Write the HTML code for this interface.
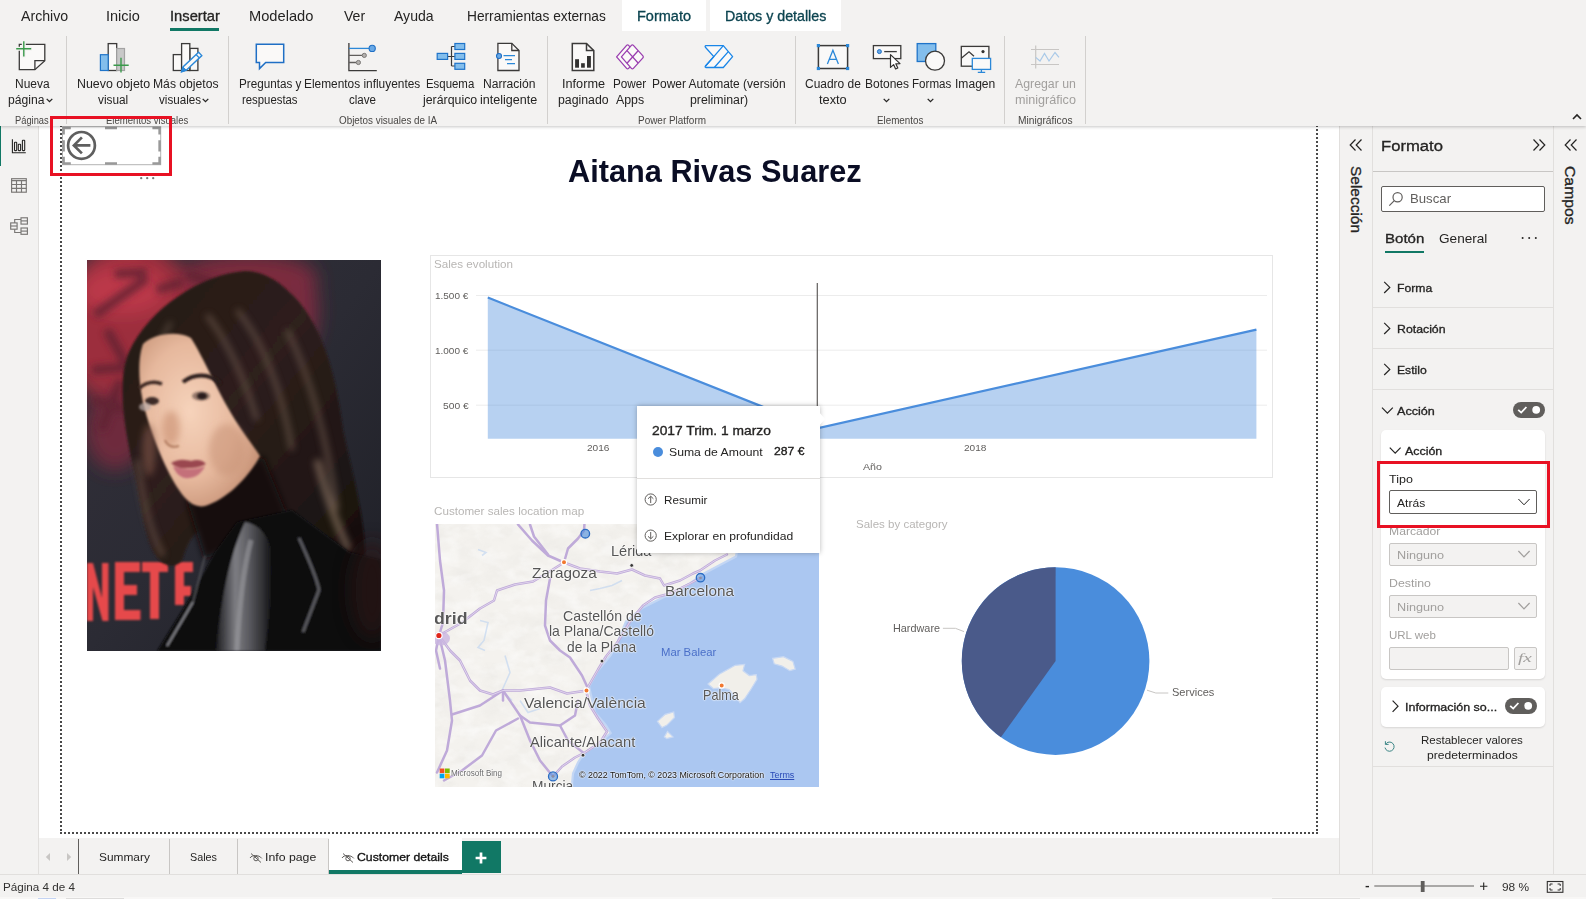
<!DOCTYPE html>
<html lang="es">
<head>
<meta charset="utf-8">
<title>Power BI Desktop</title>
<style>
*{box-sizing:border-box;margin:0;padding:0}
html,body{width:1586px;height:899px;overflow:hidden;background:#f3f2f1;font-family:"Liberation Sans",sans-serif;color:#252423}
#app{position:relative;width:1586px;height:899px;overflow:hidden;background:#f3f2f1}
.a{position:absolute}
.t{position:absolute;white-space:pre;line-height:1;transform-origin:0 50%;display:block}
svg{position:absolute;overflow:visible}
.vsep{position:absolute;width:1px;background:#d2d0ce;top:36px;height:88px}
.hline{position:absolute;height:1px;background:#e1dfdd}
.vline{position:absolute;width:1px;background:#e1dfdd}
</style>
</head>
<body>
<div id="app">

<!-- ================= CANVAS AREA (white) ================= -->
<div class="a" id="canvas" style="left:39px;top:126px;width:1300px;height:712px;background:#fff"></div>

<!-- dotted page frame -->
<div class="a" style="left:60px;top:118px;width:1258px;height:715.5px;border:2px dotted #4a4a4a;border-top:none"></div>

<!-- back button visual (selected) -->
<svg style="left:55px;top:120px" width="120" height="70" viewBox="55 120 120 70" fill="none">
 <rect x="62.5" y="126.7" width="98.2" height="38" stroke="#b3b3b3" stroke-width="1"/>
 <g stroke="#999" stroke-width="2.5">
  <path d="M63.6 134.6V127.9H70.8M152.4 127.9H159.6V134.6M159.6 156.8V163.5H152.4M70.8 163.5H63.6V156.8"/>
  <path d="M105 127.9H117M105 163.5H117M63.6 140.3V151.4M159.6 140.3V151.4"/>
 </g>
 <circle cx="81.5" cy="145.4" r="13.4" stroke="#5f5f5f" stroke-width="2.7"/>
 <path d="M74 145.4H90.4M81.9 137.4 73.9 145.4 81.9 153.4" stroke="#5f5f5f" stroke-width="2.7"/>
 <g fill="#777"><circle cx="141.2" cy="178.2" r="1.15"/><circle cx="147.2" cy="178.2" r="1.15"/><circle cx="153.2" cy="178.2" r="1.15"/></g>
</svg>

<!-- title -->
<span class="t" style="left:567.9px;top:156.3px;font-size:31.2px;color:#0a0d24;transform:scaleX(0.9848);font-weight:700">Aitana Rivas Suarez</span>

<!-- picture visual: abstract colour-composition placeholder -->
<svg style="left:87px;top:260px" width="294" height="391" viewBox="0 0 294 391">
<defs>
 <clipPath id="pc"><rect x="0" y="0" width="294" height="391"/></clipPath>
 <filter id="pb1" x="-20%" y="-20%" width="140%" height="140%"><feGaussianBlur stdDeviation="1.3"/></filter>
 <filter id="pb3" x="-30%" y="-30%" width="160%" height="160%"><feGaussianBlur stdDeviation="3.5"/></filter>
 <filter id="pb8" x="-40%" y="-40%" width="180%" height="180%"><feGaussianBlur stdDeviation="9"/></filter>
 <linearGradient id="pbg" x1="0" y1="0" x2="1" y2="1"><stop offset="0" stop-color="#33303a"/><stop offset=".5" stop-color="#2b2b34"/><stop offset="1" stop-color="#1e1f26"/></linearGradient>
 <radialGradient id="pskin" cx=".42" cy=".45" r=".65"><stop offset="0" stop-color="#f6d3bb"/><stop offset=".6" stop-color="#e6b89d"/><stop offset="1" stop-color="#c48f73"/></radialGradient>
 <linearGradient id="phair" x1="0" y1="0" x2="1" y2="1"><stop offset="0" stop-color="#241714"/><stop offset=".45" stop-color="#2e201c"/><stop offset="1" stop-color="#150e0d"/></linearGradient>
 <linearGradient id="pleather" x1="0" y1="0" x2="1" y2="0"><stop offset="0" stop-color="#1b1b1e"/><stop offset=".35" stop-color="#7d7d82"/><stop offset=".6" stop-color="#5a5a5f"/><stop offset="1" stop-color="#141416"/></linearGradient>
</defs>
<g clip-path="url(#pc)">
 <rect width="294" height="391" fill="url(#pbg)"/>
 <!-- red backdrop -->
 <g filter="url(#pb8)">
  <ellipse cx="44" cy="66" rx="70" ry="84" fill="#9c2d3e"/>
  <ellipse cx="36" cy="30" rx="44" ry="24" fill="#bb3848"/>
  <ellipse cx="160" cy="18" rx="70" ry="24" fill="#7c2a3e"/>
  <ellipse cx="215" cy="50" rx="16" ry="42" fill="#7a2a40"/>
  <ellipse cx="28" cy="170" rx="30" ry="40" fill="#6e2a3c"/>
 </g>
 <g filter="url(#pb3)" stroke="#5e2030" stroke-width="9" fill="none" opacity=".8">
  <path d="M8 55 60 18M5 110 70 105M20 70 48 120M70 30 95 22M28 14 60 12M6 140 40 150M14 170 34 120M100 14 130 24"/>
 </g>
 <!-- lower-left lettering -->
 <g filter="url(#pb1)" fill="#e6494b">
  <path d="M0 303H6L15 338V303H21.500V361H15.500L6 327V361H0Z"/>
  <path d="M28 302H53V312H37V325H50V335H37V350H53.500V360H28Z"/>
  <path d="M55 302H81V312H72V359H63V312H55Z"/>
  <path d="M88 302H106V312H97V326H104V336H97V345H88Z"/>
 </g>
 <!-- hair mass -->
 <g filter="url(#pb1)">
  <path d="M158 11C115 14 62 48 42 92C30 120 36 165 48 215C55 250 58 285 72 300C80 308 92 308 96 298C104 270 118 262 150 258L200 250C230 262 262 300 278 300C280 262 262 200 256 170C250 120 236 60 200 30C188 18 172 11 158 11Z" fill="url(#phair)"/>
 </g>
 <!-- hair highlights -->
 <g filter="url(#pb3)" fill="none" stroke="#6a564c" stroke-width="5" opacity=".75">
  <path d="M150 50C175 80 195 130 205 190"/><path d="M120 55C140 80 158 120 170 160"/><path d="M200 70C225 120 240 180 250 250"/>
  <path d="M230 200C240 240 252 270 262 290" stroke="#86705f" stroke-width="7"/>
  <path d="M50 200C56 240 62 270 76 296" stroke="#6b5548"/>
  <path d="M84 62 70 88" stroke="#8a7566" stroke-width="2.500"/>
 </g>
 <!-- neck shadow -->
 <path d="M100 240 176 196 200 255 118 300Z" fill="#120c0b" filter="url(#pb3)"/>
 <!-- face -->
 <g filter="url(#pb1)">
  <path d="M56 84C66 74 90 70 104 78C116 96 132 136 152 166C160 178 168 188 173 196C160 220 138 240 118 246C108 248 100 242 92 230C80 212 66 180 58 150C52 128 50 100 56 84Z" fill="url(#pskin)"/>
 </g>
 <g filter="url(#pb3)">
  <ellipse cx="84" cy="168" rx="9" ry="17" fill="#c9906f" opacity=".6"/>
  <ellipse cx="140" cy="190" rx="18" ry="26" fill="#c89478" opacity=".55"/>
  <ellipse cx="62" cy="190" rx="7" ry="26" fill="#8a5d4a" opacity=".55"/>
 </g>
 <g filter="url(#pb1)">
  <path d="M52 128C60 122 68 121 75 124" stroke="#3a2822" stroke-width="3.500" fill="none"/>
  <path d="M96 122C106 114 122 112 134 124" stroke="#2c1e1a" stroke-width="4" fill="none"/>
  <ellipse cx="65" cy="141" rx="7" ry="4" fill="#3c2c28"/>
  <ellipse cx="114" cy="136" rx="9" ry="4.500" fill="#35262280"/>
  <ellipse cx="115" cy="136" rx="5" ry="3.600" fill="#2a1c1a"/>
  <ellipse cx="58" cy="147" rx="6" ry="4" fill="#b9a9a6" opacity=".7"/>
  <path d="M84 203C92 198 100 200 104 201C110 199 116 200 119 204C112 208 106 208 100 208C94 209 88 207 84 203Z" fill="#9a4650"/>
  <path d="M86 206C96 210 110 210 118 206C114 216 104 219 98 218C92 217 88 212 86 206Z" fill="#c4707a"/>
  <path d="M78 180C80 186 86 188 92 186" stroke="#b07a5e" stroke-width="2" fill="none"/>
 </g>
 <!-- jacket -->
 <g filter="url(#pb1)">
  <path d="M70 391 104 336 128 292 150 262 205 250 262 292 294 300V391Z" fill="#0b0b0d"/>
  <path d="M129 391C134 340 142 296 158 262C170 264 180 272 184 290C186 330 182 360 178 391Z" fill="url(#pleather)"/>
  <path d="M150 391C152 350 156 310 164 280" stroke="#9a9a9f" stroke-width="5" fill="none" opacity=".6"/>
  <path d="M212 278C222 300 230 318 232 330L216 372" stroke="#6e6e74" stroke-width="3" fill="none" opacity=".8"/>
  <path d="M80 386 106 342" stroke="#8c8c92" stroke-width="1.800" fill="none"/>
  <path d="M106 342 118 296" stroke="#55555a" stroke-width="1.500" fill="none"/>
 </g>
 <ellipse cx="285" cy="330" rx="22" ry="50" fill="#2a1418" filter="url(#pb8)" opacity=".7"/>
</g>
</svg>


<!-- ===== Sales evolution chart ===== -->
<div class="a" style="left:430px;top:255px;width:843px;height:223px;border:1px solid #e6e6e6"></div>
<span class="t" style="left:434.4px;top:258.0px;font-size:11.6px;color:#b8b6b4;transform:scaleX(1.0041)">Sales evolution</span>
<svg style="left:430px;top:255px" width="843" height="223" viewBox="430 255 843 223" fill="none">
 <path d="M476 295.5H1267M476 350.2H1267M476 405.2H1267" stroke="#ececec" stroke-width="1"/>
 <path d="M487.8 297.6 817.3 428.4 1256.4 329.6V438.8H487.8Z" fill="#4a8ddc" fill-opacity=".4"/>
 <path d="M487.8 297.6 817.3 428.4 1256.4 329.6" stroke="#4a8ddc" stroke-width="2.2"/>
 <path d="M817.3 283V438" stroke="#605e5c" stroke-width="1.2"/>
</svg>
<span class="t" style="left:435.2px;top:291.0px;font-size:9.8px;color:#605e5c;transform:scaleX(1.0181)">1.500 €</span>
<span class="t" style="left:435.2px;top:345.5px;font-size:9.8px;color:#605e5c;transform:scaleX(1.0181)">1.000 €</span>
<span class="t" style="left:442.7px;top:400.5px;font-size:9.8px;color:#605e5c;transform:scaleX(1.0509)">500 €</span>
<span class="t" style="left:587.0px;top:443.3px;font-size:9.8px;color:#605e5c;transform:scaleX(1.0313)">2016</span>
<span class="t" style="left:964.0px;top:443.3px;font-size:9.8px;color:#605e5c;transform:scaleX(1.0313)">2018</span>
<span class="t" style="left:862.5px;top:461.5px;font-size:9.8px;color:#605e5c;transform:scaleX(1.0885)">Año</span>

<!-- ===== Map ===== -->
<span class="t" style="left:434.4px;top:505.0px;font-size:11.6px;color:#b8b6b4;transform:scaleX(1.0044)">Customer sales location map</span>
<svg style="left:435px;top:523.5px" width="384" height="263" viewBox="435 523.5 384 263">
<defs>
 <clipPath id="mc"><rect x="435" y="523.5" width="384" height="263"/></clipPath>
 <filter id="mterr" x="0" y="0" width="100%" height="100%">
  <feTurbulence type="fractalNoise" baseFrequency=".035 .06" numOctaves="4" seed="7" result="n"/>
  <feColorMatrix in="n" type="matrix" values="0 0 0 0 .55  0 0 0 0 .55  0 0 0 0 .52  0 0 0 -1.600 .95"/>
  <feComposite in2="SourceGraphic" operator="in"/>
 </filter>
 <filter id="mterr2" x="0" y="0" width="100%" height="100%">
  <feTurbulence type="fractalNoise" baseFrequency=".05 .08" numOctaves="3" seed="21" result="n"/>
  <feColorMatrix in="n" type="matrix" values="0 0 0 0 1  0 0 0 0 1  0 0 0 0 1  0 0 0 2.200 -.95"/>
  <feComposite in2="SourceGraphic" operator="in"/>
 </filter>
 <filter id="mb" x="-10%" y="-10%" width="120%" height="120%"><feGaussianBlur stdDeviation=".6"/></filter>
 <path id="mland" d="M435 523.500H742L736 556 704 573 690 583 665 596 643 607 626 621 617 643 610.700 654.700 598 670 589 686 595 712 606 725 610.700 732.500 598 743.500 584 752.800 578 762 573 773 571.700 787H435Z"/>
</defs>
<g clip-path="url(#mc)">
 <rect x="435" y="523.500" width="384" height="263" fill="#abc7f1"/>
 <use href="#mland" fill="#f4f2ee"/>
 <use href="#mland" fill="#000" filter="url(#mterr)" opacity=".16"/>
 <use href="#mland" fill="#fff" filter="url(#mterr2)" opacity=".55"/>
 <!-- coast tint -->
 <path d="M742 523.500 736 556 704 573 690 583 665 596 643 607 626 621 617 643 610.700 654.700 598 670 589 686 595 712 606 725 610.700 732.500 598 743.500 584 752.800 578 762 573 773 571.700 787" fill="none" stroke="#c3d6f4" stroke-width="2.200" filter="url(#mb)"/>
 <!-- islands -->
 <g fill="#f1efea" stroke="#c9d9f3" stroke-width="1.200" filter="url(#mb)">
  <path d="M708 683.500 719.700 673.400 735.300 664.800 744.600 664 743 670.200 749.300 675 756.300 674.100 757 678.800 750.800 689 744.600 698.300 740 702.200 736 696.700 729 689 721.200 687.400 713.500 688.200Z"/>
  <path d="M772.600 657.800 783.500 656.200 792.900 660.900 795.200 668.700 789.800 670.200 782 665.600 774.200 663.200Z"/>
  <path d="M657.400 720.900 665.200 713.900 673.700 711.500 674.500 717 666.700 724.800 662 727.100Z"/>
  <path d="M664.400 736.400 667.500 731 673 736.400 666.700 738Z"/>
 </g>
 <!-- rivers/lakes -->
 <g fill="none" stroke="#bcd3f1" stroke-width="1.600" opacity=".6" filter="url(#mb)">
  <path d="M478 549 486 552 482 555M480 620 488 622 484 640 478 647 485 650"/>
  <path d="M590 590 600 588 612 585 622 580"/>
  <path d="M505 655 510 672 502 690 512 700"/>
  <path d="M520 700 528 712 540 708"/>
 </g>
 <!-- roads -->
 <g fill="none" stroke="#bfaad9" stroke-width="2.500" stroke-linejoin="round" stroke-linecap="round">
  <path d="M437 523 440 560 444 590 443 622 439 635"/>
  <path d="M439 635 462 622 480 608 494 600 497 590 515 584 533 581 548 572 564 562"/>
  <path d="M564 562 548 555 532 540 518 524"/><path d="M530 524 534 536 548 554"/>
  <path d="M564 562 568 548 578 538 584 530 584.500 523"/>
  <path d="M564 562 580 568 600 571 617 573 632 569 645 575 660 578 664 585 680 580 693 573 700 570 715 560 727 554"/>
  <path d="M550 578 546 600 545 625 550 640 560 650 570 657 582 675 588 688"/>
  <path d="M701 577 690 583 670 593 655 597 643 605 630 621 618 641 606 656 598 669 590 683 586 690 590 705 598 718 607 731 600 742 585 752 575 757 562 766 553 776"/>
  <path d="M439 635 450 650 460 660 470 680 480 690 493 694 503 690 520 690 550 687 567 693 587 690"/>
  <path d="M439 635 445 660 450 700 452 720 447 750 437 772"/>
  <path d="M503 690 520 715 530 722 560 725 575 715 578 700"/>
  <path d="M520 715 530 740 540 760 553 776"/>
  <path d="M452 714 480 705 503 690"/>
  <path d="M518 718 496 730 482 755 462 770 444 780"/>
  <path d="M560 725 568 740 583 752"/>
  <path d="M503 690 503 700"/>
  <path d="M439 635 436 650 440 668"/>
 </g>
 <g fill="none" stroke="#e6dcf0" stroke-width=".900" stroke-linejoin="round" opacity=".9">
  <path d="M439 635 462 622 480 608 494 600 497 590 515 584 533 581 548 572 564 562"/>
  <path d="M564 562 580 568 600 571 617 573 632 569 645 575 660 578 664 585 680 580 693 573 700 570 715 560 727 554"/>
  <path d="M701 577 690 583 670 593 655 597 643 605 630 621 618 641 606 656 598 669 590 683 586 690 590 705 598 718 607 731 600 742 585 752 575 757 562 766 553 776"/>
  <path d="M439 635 450 650 460 660 470 680 480 690 493 694 503 690 520 690 550 687 567 693 587 690"/>
 </g>
 <ellipse cx="441" cy="638" rx="9" ry="7" fill="#c9b5e0" opacity=".8"/>
 <!-- city dots -->
 <g stroke="#fff" stroke-width="1.200"><circle cx="564" cy="561.700" r="2.600" fill="#f2782f"/><circle cx="586.500" cy="690" r="2.600" fill="#f2782f"/><circle cx="721.700" cy="685" r="2.600" fill="#f2782f"/><circle cx="438.900" cy="635" r="3.200" fill="#e0261c"/></g>
 <g fill="#3b3a39" stroke="#fff" stroke-width=".800"><circle cx="631.700" cy="564.900" r="1.900"/><circle cx="602" cy="660.600" r="1.900"/><circle cx="583" cy="754.700" r="1.900"/></g>
 <!-- data bubbles -->
 <g fill="#4a8ddc" stroke="#2a6cc4" stroke-width="1.300"><circle cx="585.300" cy="533.200" r="4.300" fill-opacity=".62"/><circle cx="700.500" cy="577.200" r="4.200" fill-opacity=".4"/><circle cx="553" cy="775.900" r="4.500" fill-opacity=".55"/></g><g fill="#8f8fa0"><circle cx="700.500" cy="577.500" r="1.300"/><circle cx="553" cy="775.700" r="1.300"/></g>
 <!-- bing logo -->
 <rect x="439.700" y="768" width="4.700" height="4.600" fill="#f25022"/><rect x="445" y="768" width="4.700" height="4.600" fill="#7fba00"/><rect x="439.700" y="773.200" width="4.700" height="4.600" fill="#00a4ef"/><rect x="445" y="773.200" width="4.700" height="4.600" fill="#ffb900"/>
</g>
</svg>
<div class="a" style="left:435px;top:523.5px;width:384px;height:263px;overflow:hidden"><div class="a" style="left:-435px;top:-523.5px;width:1586px;height:899px">
<span class="t" style="left:610.8px;top:544.0px;font-size:14.6px;color:#555;transform:scaleX(0.9971);text-shadow:0 0 2px #fff,0 0 2px #fff,0 0 1px #fff">Lérida</span>
<span class="t" style="left:532.1px;top:565.9px;font-size:14.8px;color:#555;transform:scaleX(1.0346);text-shadow:0 0 2px #fff,0 0 2px #fff,0 0 1px #fff">Zaragoza</span>
<span class="t" style="left:433.9px;top:610.9px;font-size:16px;color:#585858;transform:scaleX(1.1086);font-weight:700;text-shadow:0 0 2px #fff,0 0 2px #fff,0 0 1px #fff">drid</span>
<span class="t" style="left:562.5px;top:608.8px;font-size:14.6px;color:#555;transform:scaleX(0.9707);text-shadow:0 0 2px #fff,0 0 2px #fff,0 0 1px #fff">Castellón de</span>
<span class="t" style="left:549.3px;top:624.4px;font-size:14.6px;color:#555;transform:scaleX(0.9583);text-shadow:0 0 2px #fff,0 0 2px #fff,0 0 1px #fff">la Plana/Castelló</span>
<span class="t" style="left:567.2px;top:640.0px;font-size:14.6px;color:#555;transform:scaleX(0.9470);text-shadow:0 0 2px #fff,0 0 2px #fff,0 0 1px #fff">de la Plana</span>
<span class="t" style="left:665.2px;top:582.9px;font-size:15.4px;color:#555;transform:scaleX(0.9946);text-shadow:0 0 2px #fff,0 0 2px #fff,0 0 1px #fff">Barcelona</span>
<span class="t" style="left:661.1px;top:646.8px;font-size:11.8px;color:#4a6fc8;transform:scaleX(0.9580)">Mar Balear</span>
<span class="t" style="left:524.0px;top:694.9px;font-size:15px;color:#555;transform:scaleX(1.0407);text-shadow:0 0 2px #fff,0 0 2px #fff,0 0 1px #fff">Valencia/València</span>
<span class="t" style="left:529.8px;top:733.9px;font-size:15px;color:#555;transform:scaleX(0.9788);text-shadow:0 0 2px #fff,0 0 2px #fff,0 0 1px #fff">Alicante/Alacant</span>
<span class="t" style="left:702.9px;top:687.6px;font-size:14.4px;color:#555;transform:scaleX(0.8785);text-shadow:0 0 2px #fff,0 0 2px #fff,0 0 1px #fff">Palma</span>
<span class="t" style="left:532.0px;top:777.7px;font-size:15px;color:#555;transform:scaleX(0.9152);text-shadow:0 0 2px #fff,0 0 2px #fff,0 0 1px #fff">Murcia</span>
<span class="t" style="left:451.4px;top:768.8px;font-size:8.8px;color:#6a6a6a;transform:scaleX(0.9165);text-shadow:0 0 2px #fff,0 0 2px #fff,0 0 1px #fff">Microsoft Bing</span>
<span class="t" style="left:578.7px;top:769.9px;font-size:9.6px;color:#111;transform:scaleX(0.9225);text-shadow:0 0 2px #fff,0 0 2px #fff,0 0 1px #fff">© 2022 TomTom, © 2023 Microsoft Corporation</span>
<span class="t" style="left:770.3px;top:769.9px;font-size:9.6px;color:#2a4bb8;transform:scaleX(0.9286);text-decoration:underline">Terms</span>
</div></div>


<!-- ===== Pie ===== -->
<span class="t" style="left:856.4px;top:518.0px;font-size:11.6px;color:#b8b6b4;transform:scaleX(0.9935)">Sales by category</span>
<svg style="left:880px;top:560px" width="360" height="200" viewBox="880 560 360 200" fill="none">
 <circle cx="1055.6" cy="661.1" r="93.8" fill="#4a8ddc"/>
 <path d="M1055.6 661.1V567.3A93.8 93.8 0 0 0 1000.9 737.3Z" fill="#4a5a8a"/>
 <path d="M942.9 628.3H955.4L964 631.6M1147 690.2 1155.8 693H1168.3" stroke="#c8c6c4" stroke-width="1"/>
</svg>
<span class="t" style="left:892.5px;top:623.5px;font-size:10.4px;color:#605e5c;transform:scaleX(1.0442)">Hardware</span>
<span class="t" style="left:1171.5px;top:687.7px;font-size:10.4px;color:#605e5c;transform:scaleX(1.0627)">Services</span>

<!-- ===== Tooltip ===== -->
<div class="a" style="left:637px;top:406px;width:183px;height:147px;background:#fff;box-shadow:0 0 5px rgba(0,0,0,.28)"></div>
<svg style="left:819px;top:411px" width="8" height="16" viewBox="0 0 8 16"><path d="M0 1 6 8 0 15Z" fill="#fff"/></svg>
<span class="t" style="left:652.4px;top:425.1px;font-size:12.2px;color:#252423;transform:scaleX(1.1316);-webkit-text-stroke:.32px #252423">2017 Trim. 1 marzo</span>
<div class="a" style="left:653px;top:446.6px;width:10.4px;height:10.4px;border-radius:50%;background:#4a8ddc"></div>
<span class="t" style="left:669.4px;top:446.0px;font-size:11.6px;color:#252423;transform:scaleX(1.0529)">Suma de Amount</span>
<span class="t" style="left:774.1px;top:445.8px;font-size:11.8px;color:#1b1a19;transform:scaleX(1.0321);-webkit-text-stroke:.32px #1b1a19">287 €</span>
<div class="a" style="left:637px;top:478px;width:183px;height:1px;background:#e1dfdd"></div>
<svg style="left:644px;top:493px" width="14" height="50" viewBox="644 493 14 50" fill="none" stroke="#605e5c" stroke-width="1">
 <circle cx="650.7" cy="499.5" r="5.6"/><path d="M650.7 503V496.3M648 498.8 650.7 496.2 653.4 498.8"/>
 <circle cx="650.7" cy="535.6" r="5.6"/><path d="M650.7 532V538.8M648 536.3 650.7 538.9 653.4 536.3"/>
</svg>
<span class="t" style="left:664.1px;top:493.9px;font-size:11.6px;color:#252423;transform:scaleX(1.0067)">Resumir</span>
<span class="t" style="left:664.1px;top:530.0px;font-size:11.6px;color:#252423;transform:scaleX(1.0437)">Explorar en profundidad</span>


<!-- ================= LEFT SIDEBAR ================= -->
<div class="a" style="left:0;top:126px;width:39px;height:748px;background:#f3f2f1;border-right:1px solid #e1dfdd"></div>
<div class="a" style="left:0;top:126px;width:1px;height:40px;background:#117865"></div>
<svg style="left:0;top:126px" width="39" height="120" viewBox="0 126 39 120" fill="none" stroke="#3b3a39" stroke-width="1.1">
 <!-- report view -->
 <path d="M12.4 139.2V152.7H25.8" stroke="#252423"/>
 <g stroke="#252423"><rect x="14.5" y="142.2" width="2.2" height="8.4" rx=".5"/><rect x="18.3" y="144.2" width="2.3" height="6.4" rx=".5"/><rect x="22.4" y="140.3" width="2.3" height="10.3" rx=".5"/></g>
 <!-- data view -->
 <g stroke="#797775" stroke-width="1.15"><rect x="11.6" y="178.7" width="14.7" height="13.5"/><path d="M11.6 180.6H26.300M11.600 184.500H26.300M11.600 188.400H26.300M16.500 180.600V192.200M21.500 180.600V192.200"/></g>
 <!-- model view -->
 <g stroke="#797775" stroke-width="1.15"><rect x="10.700" y="222.900" width="6.400" height="6.300"/><path d="M10.700 226H17.100"/><rect x="21" y="217.800" width="6.400" height="6.300"/><path d="M21 220.900H27.400"/><rect x="21" y="228" width="6.400" height="6.300"/><path d="M21 231.100H27.400"/><path d="M14.700 222.900V219.500H21M14.700 229.200V232.500H21"/></g>
</svg>


<!-- ================= RIGHT PANES ================= -->
<div class="a" id="panes" style="left:1339px;top:126px;width:247px;height:748px;background:#f3f2f1"></div>
<!-- pane separators -->
<div class="vline" style="left:1339px;top:126px;height:748px"></div>
<div class="vline" style="left:1372px;top:126px;height:748px"></div>
<div class="vline" style="left:1553px;top:126px;height:748px"></div>
<!-- collapsed Selección / Campos -->
<svg style="left:1349px;top:138px" width="14" height="14" viewBox="0 0 14 14" fill="none" stroke="#252423" stroke-width="1.2"><path d="M6.5 1.5 1.2 7 6.5 12.5M12.5 1.5 7.2 7 12.5 12.5"/></svg>
<svg style="left:1564px;top:138px" width="14" height="14" viewBox="0 0 14 14" fill="none" stroke="#252423" stroke-width="1.2"><path d="M6.5 1.5 1.2 7 6.5 12.5M12.5 1.5 7.2 7 12.5 12.5"/></svg>
<svg style="left:1532px;top:138px" width="14" height="14" viewBox="0 0 14 14" fill="none" stroke="#252423" stroke-width="1.2"><path d="M1.5 1.5 6.8 7 1.5 12.5M7.5 1.5 12.8 7 7.5 12.5"/></svg>
<div class="a" style="left:1354.6px;top:165.5px;width:0;height:0"><span style="position:absolute;left:0;top:0;white-space:pre;font-size:14.2px;font-weight:400;-webkit-text-stroke:.32px #252423;line-height:1;color:#252423;transform-origin:0 0;transform:rotate(90deg) translateY(-55%) scaleX(1.09)">Selección</span></div>
<div class="a" style="left:1568.8px;top:166px;width:0;height:0"><span style="position:absolute;left:0;top:0;white-space:pre;font-size:14.2px;font-weight:400;-webkit-text-stroke:.32px #252423;line-height:1;color:#252423;transform-origin:0 0;transform:rotate(90deg) translateY(-55%) scaleX(1.11)">Campos</span></div>

<!-- Formato header -->
<span class="t" style="left:1380.5px;top:138.4px;font-size:15.4px;color:#252423;transform:scaleX(1.0807);-webkit-text-stroke:.32px #252423">Formato</span>
<div class="hline" style="left:1373px;top:171px;width:180px;background:#c8c6c4"></div>
<!-- search -->
<div class="a" style="left:1381px;top:185.5px;width:164px;height:26.5px;background:#fff;border:1px solid #605e5c;border-radius:2px"></div>
<svg style="left:1388px;top:191px" width="16" height="16" viewBox="0 0 16 16" fill="none" stroke="#605e5c" stroke-width="1.2"><circle cx="9.6" cy="6.2" r="4.6"/><path d="M6.3 9.6 1.3 14.6"/></svg>
<span class="t" style="left:1409.6px;top:192.3px;font-size:13.4px;color:#605e5c;transform:scaleX(0.9845)">Buscar</span>
<!-- sub tabs -->
<span class="t" style="left:1384.6px;top:232.1px;font-size:13.6px;color:#252423;transform:scaleX(1.1078);-webkit-text-stroke:.32px #252423">Botón</span>
<div class="a" style="left:1385px;top:250.5px;width:38.5px;height:2px;background:#117865"></div>
<span class="t" style="left:1438.8px;top:232.1px;font-size:13.6px;color:#252423;transform:scaleX(0.9997)">General</span>
<svg style="left:1521px;top:236px" width="17" height="4" viewBox="0 0 17 4" fill="#252423"><circle cx="1.6" cy="2" r="1"/><circle cx="8.2" cy="2" r="1"/><circle cx="14.8" cy="2" r="1"/></svg>

<!-- sections -->
<svg style="left:1380px;top:280px" width="14" height="140" viewBox="1380 280 14 140" fill="none" stroke="#252423" stroke-width="1.2">
 <path d="M1384.2 281.8 1389.8 287.4 1384.2 293"/>
 <path d="M1384.2 322.8 1389.8 328.4 1384.2 334"/>
 <path d="M1384.2 363.8 1389.8 369.4 1384.2 375"/>
 <path d="M1382 407.6 1387.4 413.2 1392.8 407.6"/>
</svg>
<span class="t" style="left:1396.6px;top:281.8px;font-size:11.6px;color:#252423;transform:scaleX(1.0496);-webkit-text-stroke:.32px #252423">Forma</span>
<span class="t" style="left:1396.6px;top:322.8px;font-size:11.6px;color:#252423;transform:scaleX(1.0611);-webkit-text-stroke:.32px #252423">Rotación</span>
<span class="t" style="left:1396.6px;top:363.8px;font-size:11.6px;color:#252423;transform:scaleX(1.0494);-webkit-text-stroke:.32px #252423">Estilo</span>
<span class="t" style="left:1396.6px;top:404.8px;font-size:11.6px;color:#252423;transform:scaleX(1.0847);-webkit-text-stroke:.32px #252423">Acción</span>
<div class="hline" style="left:1373px;top:307px;width:180px"></div>
<div class="hline" style="left:1373px;top:348px;width:180px"></div>
<div class="hline" style="left:1373px;top:389px;width:180px"></div>
<!-- toggle 1 -->
<div class="a" style="left:1513px;top:402.3px;width:32px;height:15.6px;border-radius:8px;background:#605e5c"></div>
<svg style="left:1513px;top:402.3px" width="32" height="15.6" viewBox="0 0 32 15.6" fill="none"><path d="M5.2 7.8 8.2 10.6 13.4 5" stroke="#fff" stroke-width="1.8"/><circle cx="23.2" cy="7.8" r="3.9" fill="#fff"/></svg>

<!-- card 1 -->
<div class="a" style="left:1381px;top:430px;width:164px;height:248.5px;background:#fff;border-radius:5px;box-shadow:0 1px 2px rgba(0,0,0,.12)"></div>
<svg style="left:1388px;top:444px" width="14" height="12" viewBox="1388 444 14 12" fill="none" stroke="#252423" stroke-width="1.2"><path d="M1389.8 447.6 1395.2 453.2 1400.6 447.6"/></svg>
<span class="t" style="left:1404.7px;top:444.8px;font-size:11.6px;color:#252423;transform:scaleX(1.0703);-webkit-text-stroke:.32px #252423">Acción</span>
<span class="t" style="left:1388.7px;top:473.2px;font-size:11.6px;color:#252423;transform:scaleX(1.0784)">Tipo</span>
<div class="a" style="left:1389px;top:490px;width:148px;height:23.5px;background:#fff;border:1px solid #605e5c;border-radius:2px"></div>
<span class="t" style="left:1397.4px;top:496.6px;font-size:11.6px;color:#252423;transform:scaleX(1.0406)">Atrás</span>
<svg style="left:1517px;top:497px" width="14" height="10" viewBox="0 0 14 10" fill="none" stroke="#252423" stroke-width="1"><path d="M1.4 2 7 7.8 12.6 2"/></svg>

<span class="t" style="left:1388.7px;top:525.4px;font-size:11.6px;color:#a19f9d;transform:scaleX(1.0488)">Marcador</span>
<div class="a" style="left:1389px;top:542.5px;width:148px;height:23.5px;background:#f3f2f1;border:1px solid #c8c6c4;border-radius:2px"></div>
<span class="t" style="left:1397.4px;top:548.6px;font-size:11.6px;color:#a19f9d;transform:scaleX(1.0916)">Ninguno</span>
<svg style="left:1517px;top:549px" width="14" height="10" viewBox="0 0 14 10" fill="none" stroke="#a19f9d" stroke-width="1.2"><path d="M1.4 2 7 7.8 12.6 2"/></svg>

<span class="t" style="left:1388.7px;top:577.4px;font-size:11.6px;color:#a19f9d;transform:scaleX(1.0648)">Destino</span>
<div class="a" style="left:1389px;top:594.5px;width:148px;height:23.5px;background:#f3f2f1;border:1px solid #c8c6c4;border-radius:2px"></div>
<span class="t" style="left:1397.4px;top:600.6px;font-size:11.6px;color:#a19f9d;transform:scaleX(1.0916)">Ninguno</span>
<svg style="left:1517px;top:601px" width="14" height="10" viewBox="0 0 14 10" fill="none" stroke="#a19f9d" stroke-width="1.2"><path d="M1.4 2 7 7.8 12.6 2"/></svg>

<span class="t" style="left:1388.7px;top:629.4px;font-size:11.6px;color:#a19f9d;transform:scaleX(0.9914)">URL web</span>
<div class="a" style="left:1389px;top:646.5px;width:120px;height:23.5px;background:#f3f2f1;border:1px solid #c8c6c4;border-radius:2px"></div>
<div class="a" style="left:1513.5px;top:646.5px;width:23.5px;height:23.5px;background:#f3f2f1;border:1px solid #c8c6c4;border-radius:2px"></div>
<span class="t" style="left:1518.3px;top:651.1px;font-size:13.5px;color:#a19f9d;transform:scaleX(1.4205);font-style:italic;font-family:'Liberation Serif',serif">fx</span>

<!-- card 2 -->
<div class="a" style="left:1381px;top:686.5px;width:164px;height:40px;background:#fff;border-radius:5px;box-shadow:0 1px 2px rgba(0,0,0,.12)"></div>
<svg style="left:1390px;top:699px" width="10" height="14" viewBox="0 0 10 14" fill="none" stroke="#252423" stroke-width="1.2"><path d="M2.6 1.6 8 7.2 2.6 12.8"/></svg>
<span class="t" style="left:1404.7px;top:700.8px;font-size:11.6px;color:#252423;transform:scaleX(1.0753);-webkit-text-stroke:.32px #252423">Información so...</span>
<div class="a" style="left:1505px;top:698.4px;width:32px;height:15.6px;border-radius:8px;background:#605e5c"></div>
<svg style="left:1505px;top:698.4px" width="32" height="15.6" viewBox="0 0 32 15.6" fill="none"><path d="M5.2 7.8 8.2 10.6 13.4 5" stroke="#fff" stroke-width="1.8"/><circle cx="23.2" cy="7.8" r="3.9" fill="#fff"/></svg>

<!-- reset -->
<svg style="left:1383px;top:740px" width="13" height="13" viewBox="0 0 13 13" fill="none" stroke="#3a8585" stroke-width="1"><path d="M2.6 4.2A4.6 4.6 0 1 1 2 7.6"/><path d="M2.4 1.2V4.4H5.6"/></svg>
<span class="t" style="left:1421.4px;top:733.6px;font-size:11.6px;color:#252423;transform:scaleX(0.9941)">Restablecer valores</span>
<span class="t" style="left:1426.8px;top:749.4px;font-size:11.6px;color:#252423;transform:scaleX(1.0430)">predeterminados</span>
<div class="hline" style="left:1373px;top:766px;width:180px"></div>


<!-- ================= PAGE TABS + STATUS ================= -->
<!-- page tabs strip -->
<div class="a" style="left:39px;top:838px;width:1300px;height:36px;background:#f3f2f1"></div>
<svg style="left:44px;top:852px" width="30" height="10" viewBox="0 0 30 10" fill="#c8c6c4"><path d="M6 1V9L1.8 5Z"/><path d="M23 1V9L27.2 5Z"/></svg>
<div class="vline" style="left:78px;top:839px;height:35px;background:#605e5c"></div>
<div class="vline" style="left:169px;top:839px;height:35px;background:#c8c6c4"></div>
<div class="vline" style="left:237px;top:839px;height:35px;background:#c8c6c4"></div>
<div class="vline" style="left:328px;top:839px;height:35px;background:#c8c6c4"></div>
<div class="a" style="left:329px;top:838px;width:133px;height:36px;background:#fff;border-bottom:4px solid #117865"></div>
<span class="t" style="left:98.7px;top:851.2px;font-size:11.6px;color:#252423;transform:scaleX(1.0252)">Summary</span>
<span class="t" style="left:189.8px;top:851.2px;font-size:11.6px;color:#252423;transform:scaleX(0.9292)">Sales</span>
<span class="t" style="left:265.2px;top:851.2px;font-size:11.6px;color:#252423;transform:scaleX(1.0600)">Info page</span>
<span class="t" style="left:357.1px;top:851.2px;font-size:11.6px;color:#111;transform:scaleX(1.0559);-webkit-text-stroke:.32px #111">Customer details</span>
<svg style="left:249px;top:851px" width="14" height="12" viewBox="0 0 14 12" fill="none" stroke="#605e5c" stroke-width="1"><path d="M1 7C3 3.600 10 3.600 12.800 7.400"/><circle cx="7" cy="7.600" r="2.200"/><path d="M2 2.500 12 11.500"/></svg>
<svg style="left:341px;top:851px" width="14" height="12" viewBox="0 0 14 12" fill="none" stroke="#605e5c" stroke-width="1"><path d="M1 7C3 3.600 10 3.600 12.800 7.400"/><circle cx="7" cy="7.600" r="2.200"/><path d="M2 2.500 12 11.500"/></svg>
<div class="a" style="left:462px;top:841px;width:39px;height:32px;background:#117865"></div>
<svg style="left:475.400px;top:851.600px" width="12" height="12" viewBox="0 0 12 12"><path d="M6 .6V11.400M.6 6H11.400" stroke="#fff" stroke-width="2.700"/></svg>

<!-- status bar -->
<div class="a" style="left:0;top:874px;width:1586px;height:23px;background:#f3f2f1;border-top:1px solid #e1dfdd"></div>
<div class="a" style="left:0;top:897px;width:1586px;height:2px;background:#f8f7f6"></div>
<span class="t" style="left:2.5px;top:880.8px;font-size:11.6px;color:#323130;transform:scaleX(1.0056)">Página 4 de 4</span>
<svg style="left:1360px;top:878px" width="210" height="18" viewBox="1360 878 210 18" fill="none">
 <path d="M1365.6 886.6H1369" stroke="#252423" stroke-width="1.4"/>
 <path d="M1374.3 886H1474" stroke="#605e5c" stroke-width="1"/>
 <rect x="1420.8" y="881" width="3.8" height="11" fill="#605e5c"/>
 <path d="M1480 886.2H1487.400M1483.700 882.500V889.900" stroke="#252423" stroke-width="1.1"/>
 <rect x="1547.300" y="881.500" width="15.600" height="10.800" stroke="#323130" stroke-width="1.1"/>
 <path d="M1550 886V884H1552.600M1557.600 884H1560.200V886M1560.200 888V890H1557.600M1552.600 890H1550V888" stroke="#323130" stroke-width="1"/>
</svg>
<span class="t" style="left:1502.4px;top:880.8px;font-size:11.6px;color:#323130;transform:scaleX(1.0273)">98 %</span>
<!-- faint artefacts at very bottom edge -->
<div class="a" style="left:38px;top:897.5px;width:18px;height:1.5px;background:#c3d3f3"></div>
<div class="a" style="left:66px;top:898px;width:58px;height:1px;background:#dddcdb"></div>
<div class="a" style="left:1272px;top:898px;width:88px;height:1px;background:#e2e1e0"></div>


<!-- ================= RIBBON ================= -->
<div class="a" id="ribbon" style="left:0;top:0;width:1586px;height:126px;background:#f3f2f1;box-shadow:0 1px 3px rgba(0,0,0,.22)"></div>
<!-- tabs -->
<div class="a" style="left:622px;top:0;width:84px;height:31px;background:#fff"></div>
<div class="a" style="left:710px;top:0;width:131px;height:31px;background:#fff"></div>
<span class="t" style="left:20.5px;top:9.3px;font-size:14.1px;color:#252423;transform:scaleX(1.0045)">Archivo</span>
<span class="t" style="left:105.5px;top:9.3px;font-size:14.1px;color:#252423;transform:scaleX(1.0305)">Inicio</span>
<span class="t" style="left:169.5px;top:9.3px;font-size:14.1px;color:#252423;transform:scaleX(1.0446);-webkit-text-stroke:.32px #252423">Insertar</span>
<div class="a" style="left:170px;top:28px;width:49px;height:3px;background:#117865"></div>
<span class="t" style="left:249.0px;top:9.3px;font-size:14.1px;color:#252423;transform:scaleX(1.0404)">Modelado</span>
<span class="t" style="left:343.6px;top:9.3px;font-size:14.1px;color:#252423;transform:scaleX(0.9978)">Ver</span>
<span class="t" style="left:394.4px;top:9.3px;font-size:14.1px;color:#252423;transform:scaleX(0.9973)">Ayuda</span>
<span class="t" style="left:466.5px;top:9.3px;font-size:14.1px;color:#252423;transform:scaleX(0.9737)">Herramientas externas</span>
<span class="t" style="left:637.2px;top:9.3px;font-size:14.1px;color:#0c4450;transform:scaleX(1.0291);-webkit-text-stroke:.32px #0c4450">Formato</span>
<span class="t" style="left:724.6px;top:9.3px;font-size:14.1px;color:#0c4450;transform:scaleX(1.0103);-webkit-text-stroke:.32px #0c4450">Datos y detalles</span>

<!-- group separators -->
<div class="vsep" style="left:66px"></div>
<div class="vsep" style="left:228px"></div>
<div class="vsep" style="left:547px"></div>
<div class="vsep" style="left:795px"></div>
<div class="vsep" style="left:1004px"></div>
<div class="vsep" style="left:1085px"></div>

<!-- button labels -->
<span class="t" style="left:14.9px;top:77.6px;font-size:12.3px;color:#252423;transform:scaleX(0.9714)">Nueva</span>
<span class="t" style="left:8.1px;top:93.7px;font-size:12.3px;color:#252423;transform:scaleX(0.9863)">página</span>
<span class="t" style="left:76.9px;top:77.6px;font-size:12.3px;color:#252423;transform:scaleX(1.0091)">Nuevo objeto</span>
<span class="t" style="left:98.1px;top:93.7px;font-size:12.3px;color:#252423;transform:scaleX(0.9611)">visual</span>
<span class="t" style="left:153.0px;top:77.6px;font-size:12.3px;color:#252423;transform:scaleX(0.9882)">Más objetos</span>
<span class="t" style="left:158.7px;top:93.7px;font-size:12.3px;color:#252423;transform:scaleX(0.9458)">visuales</span>
<span class="t" style="left:238.7px;top:77.6px;font-size:12.3px;color:#252423;transform:scaleX(0.9513)">Preguntas y</span>
<span class="t" style="left:242.1px;top:93.7px;font-size:12.3px;color:#252423;transform:scaleX(0.9231)">respuestas</span>
<span class="t" style="left:304.4px;top:77.6px;font-size:12.3px;color:#252423;transform:scaleX(0.9661)">Elementos influyentes</span>
<span class="t" style="left:349.0px;top:93.7px;font-size:12.3px;color:#252423;transform:scaleX(0.9412)">clave</span>
<span class="t" style="left:426.4px;top:77.6px;font-size:12.3px;color:#252423;transform:scaleX(0.9283)">Esquema</span>
<span class="t" style="left:423.1px;top:93.7px;font-size:12.3px;color:#252423;transform:scaleX(1.0043)">jerárquico</span>
<span class="t" style="left:483.2px;top:77.6px;font-size:12.3px;color:#252423;transform:scaleX(0.9834)">Narración</span>
<span class="t" style="left:480.4px;top:93.7px;font-size:12.3px;color:#252423;transform:scaleX(1.0205)">inteligente</span>
<span class="t" style="left:561.6px;top:77.6px;font-size:12.3px;color:#252423;transform:scaleX(1.0318)">Informe</span>
<span class="t" style="left:557.8px;top:93.7px;font-size:12.3px;color:#252423;transform:scaleX(1.0004)">paginado</span>
<span class="t" style="left:613.4px;top:77.6px;font-size:12.3px;color:#252423;transform:scaleX(0.9533)">Power</span>
<span class="t" style="left:616.0px;top:93.7px;font-size:12.3px;color:#252423;transform:scaleX(1.0035)">Apps</span>
<span class="t" style="left:651.7px;top:77.6px;font-size:12.3px;color:#252423;transform:scaleX(0.9726)">Power Automate (versión</span>
<span class="t" style="left:689.8px;top:93.7px;font-size:12.3px;color:#252423;transform:scaleX(1.0006)">preliminar)</span>
<span class="t" style="left:805.4px;top:77.6px;font-size:12.3px;color:#252423;transform:scaleX(0.9720)">Cuadro de</span>
<span class="t" style="left:819.4px;top:93.7px;font-size:12.3px;color:#252423;transform:scaleX(1.0397)">texto</span>
<span class="t" style="left:864.6px;top:77.6px;font-size:12.3px;color:#252423;transform:scaleX(0.9757)">Botones</span>
<span class="t" style="left:911.6px;top:77.6px;font-size:12.3px;color:#252423;transform:scaleX(0.9434)">Formas</span>
<span class="t" style="left:954.7px;top:77.6px;font-size:12.3px;color:#252423;transform:scaleX(0.9829)">Imagen</span>
<span class="t" style="left:1015.0px;top:77.6px;font-size:12.3px;color:#a19f9d;transform:scaleX(1.0014)">Agregar un</span>
<span class="t" style="left:1015.0px;top:93.7px;font-size:12.3px;color:#a19f9d;transform:scaleX(1.0246)">minigráfico</span>

<!-- small chevrons -->
<svg style="left:46px;top:98px" width="7" height="5" viewBox="0 0 7 5"><path d="M.7.9 3.5 3.7 6.3.9" fill="none" stroke="#252423" stroke-width="1.3"/></svg>
<svg style="left:202px;top:98px" width="7" height="5" viewBox="0 0 7 5"><path d="M.7.9 3.5 3.7 6.3.9" fill="none" stroke="#252423" stroke-width="1.3"/></svg>
<svg style="left:883px;top:98px" width="7" height="5" viewBox="0 0 7 5"><path d="M.7.9 3.5 3.7 6.3.9" fill="none" stroke="#252423" stroke-width="1.3"/></svg>
<svg style="left:927px;top:98px" width="7" height="5" viewBox="0 0 7 5"><path d="M.7.9 3.5 3.7 6.3.9" fill="none" stroke="#252423" stroke-width="1.3"/></svg>
<!-- collapse ribbon chevron -->
<svg style="left:1572px;top:113px" width="10" height="7" viewBox="0 0 10 7"><path d="M1 6 5 2 9 6" fill="none" stroke="#252423" stroke-width="1.6"/></svg>

<!-- group labels -->
<span class="t" style="left:15.0px;top:115.5px;font-size:10.1px;color:#484644;transform:scaleX(0.9240)">Páginas</span>
<span class="t" style="left:106.4px;top:115.5px;font-size:10.1px;color:#484644;transform:scaleX(0.9464)">Elementos visuales</span>
<span class="t" style="left:339.2px;top:115.5px;font-size:10.1px;color:#484644;transform:scaleX(0.9768)">Objetos visuales de IA</span>
<span class="t" style="left:637.5px;top:115.5px;font-size:10.1px;color:#484644;transform:scaleX(0.9857)">Power Platform</span>
<span class="t" style="left:877.1px;top:115.5px;font-size:10.1px;color:#484644;transform:scaleX(0.9729)">Elementos</span>
<span class="t" style="left:1018.0px;top:115.5px;font-size:10.1px;color:#484644;transform:scaleX(1.0121)">Minigráficos</span>
<!-- ribbon icons: one big svg in page coords -->
<svg style="left:0;top:0" width="1586" height="126" viewBox="0 0 1586 126" fill="none" stroke-linejoin="miter">
<g stroke="#3b3a39" stroke-width="1.3" fill="#faf9f8">
 <!-- new page -->
 <path d="M19.3 44.3H44.8V60.7L34.9 69.7H19.3Z"/>
 <path d="M34.9 69.7V60.7H44.8" fill="none"/>
 <!-- new visual: middle bar -->
 <rect x="108.2" y="43.6" width="8.5" height="26.9"/>
 <!-- more visuals bars -->
 <rect x="173.3" y="54.6" width="8.3" height="15.9"/>
 <rect x="189.8" y="48.4" width="8.1" height="22.1"/>
 <rect x="181.6" y="43.6" width="8.2" height="26.9"/>
 <!-- key influencers axes -->
 <path d="M348.9 43V70.6H376.8" fill="none"/>
 <!-- smart narrative page -->
 <path d="M497.9 43.3H511.8L519 50.5V70.5H497.9Z"/>
 <path d="M511.8 43.3V50.5H519" fill="none"/>
 <!-- paginated report page -->
 <path d="M572.3 43.5H586.5L593.8 50.6V70.5H572.3Z" stroke-width="1.5"/>
 <path d="M586.5 43.5V50.6H593.8" fill="none" stroke-width="1.5"/>
 <!-- text box -->
 <rect x="818.4" y="45.6" width="29.2" height="22.9" stroke-width="1.5"/>
 <!-- buttons -->
 <rect x="873.4" y="45.6" width="27.4" height="13"/>
 <path d="M884.2 51.6H896.8" fill="none"/>
 <!-- image frame -->
 <rect x="961.3" y="46.4" width="27.6" height="19.8"/>
 <path d="M961.3 58.3 969 51.8 974 56.3" fill="none"/>
</g>
<!-- plus gaps + green pluses -->
<path d="M23.8 40V57.5M15 48.7H32" stroke="#f3f2f1" stroke-width="4"/>
<path d="M23.8 41.2V56.4M16.2 48.7H31.2" stroke="#3a9a4b" stroke-width="1.4"/>
<rect x="100.4" y="54.7" width="7.8" height="15.8" fill="#83beec" stroke="#1f74c9" stroke-width="1.2"/>
<rect x="116.7" y="48.5" width="7.8" height="22" fill="#c8c8c8" stroke="#a3a3a3" stroke-width="1.2"/>
<path d="M121 57.8V72.6M113.5 65.2H128.7" stroke="#3a9a4b" stroke-width="1.4"/>
<!-- pencil -->
<path d="M198.6 52.2 201.8 55.6 186.3 70.2 181.6 71.8 183 67Z" fill="#faf9f8" stroke="#2b88d8" stroke-width="1.4"/>
<path d="M183 67 186.3 70.2 181.6 71.8Z" fill="#2b88d8" stroke="#2b88d8"/>
<path d="M196 54.5 199.4 58" stroke="#2b88d8" stroke-width="1.2"/>
<!-- Q&A bubble -->
<path d="M256.3 44.2H283.7V62.5H265.7L259.5 68.6V62.5H256.3Z" fill="#faf9f8" stroke="#1f6fc5" stroke-width="1.5"/>
<!-- key influencer lollipops -->
<path d="M349 48.4H369" stroke="#2b88d8" stroke-width="1.3"/>
<circle cx="372.2" cy="48.4" r="3.1" fill="#69a9e6" stroke="#1f6fc5" stroke-width="1.1"/>
<path d="M349 55.4H362M349 62.5H356" stroke="#605e5c" stroke-width="1.3"/>
<circle cx="364.3" cy="55.4" r="2.1" fill="#b3b0ad" stroke="#797775" stroke-width="1"/>
<circle cx="358.4" cy="62.5" r="2.1" fill="#b3b0ad" stroke="#797775" stroke-width="1"/>
<!-- decomposition tree -->
<path d="M447.7 56.5H455M451.5 46.5V66M451.5 46.5H455M451.5 66H455" stroke="#3b3a39" stroke-width="1.2"/>
<g fill="#83beec" stroke="#1f74c9" stroke-width="1.2">
 <rect x="437.2" y="53.4" width="10.4" height="6"/>
 <rect x="454.9" y="43.5" width="9.8" height="6"/>
 <rect x="454.9" y="53.4" width="9.8" height="6"/>
 <rect x="454.9" y="63.3" width="9.8" height="6"/>
</g>
<!-- smart narrative details -->
<path d="M503.5 55.6H515M505 59.6H512M507 63.6H515" stroke="#2b88d8" stroke-width="1.2"/>
<circle cx="499" cy="56" r="2.5" fill="#69a9e6" stroke="#1f6fc5" stroke-width="1.1"/>
<!-- paginated report bars -->
<g fill="#323130"><rect x="575.1" y="59.2" width="3.9" height="8.5"/><rect x="581.1" y="63.2" width="3.7" height="4.5"/><rect x="587" y="56" width="3.9" height="11.7"/></g>
<!-- Power Apps -->
<g stroke="#9a3eb0" stroke-width="1.3" stroke-linejoin="round" fill="#faf9f8">
 <path d="M616.6 56.9 626.6 45.4Q627.6 44.3 628.6 45.4L638.6 56.9 628.6 68.4Q627.6 69.5 626.6 68.4Z"/>
 <path d="M621.4 56.9 631.4 45.4Q632.4 44.3 633.4 45.4L642.9 55.9Q643.8 56.9 642.9 57.9L633.4 68.4Q632.4 69.5 631.4 68.4Z"/>
 <path d="M627 50.6 638.1 63M627 63.2 638.1 50.8" fill="none"/>
</g>
<!-- Power Automate -->
<g stroke="#1a86e8" stroke-width="1.3" stroke-linejoin="round" fill="#faf9f8">
 <path d="M706 45.7H723.3L732.6 56.6 723.3 67.5H706Q704.6 67.2 705.4 66L713.8 56.6 705.4 47.2Q704.6 46 706 45.7Z"/>
 <path d="M723.3 45.7 705.6 66.2M728.3 51.6 714.3 67.5" fill="none"/>
</g>
<!-- text box handles + A -->
<g fill="#2b88d8"><rect x="816.8" y="44" width="3.2" height="3.2"/><rect x="846" y="44" width="3.2" height="3.2"/><rect x="816.8" y="66.9" width="3.2" height="3.2"/><rect x="846" y="66.9" width="3.2" height="3.2"/></g>
<path d="M827.4 64 832.9 50.2 838.4 64M829.3 59.4H836.5" stroke="#2b88d8" stroke-width="1.3" stroke-linejoin="miter"/>
<!-- buttons dot + cursor -->
<circle cx="879.4" cy="51.6" r="2" fill="#69a9e6" stroke="#1f6fc5" stroke-width="1"/>
<path d="M890.5 54.6V67.4L893.6 64.6 895.6 69 897.8 68 895.8 63.8 900 63.6Z" fill="#fff" stroke="#323130" stroke-width="1.2" stroke-linejoin="round"/>
<!-- shapes -->
<rect x="917.2" y="43.6" width="18.6" height="17.9" fill="#83beec" stroke="#1f74c9" stroke-width="1.3"/>
<circle cx="935" cy="60.7" r="9.5" fill="#faf9f8" stroke="#3b3a39" stroke-width="1.3"/>
<!-- image: dot + monitor -->
<circle cx="983" cy="51.6" r="1.6" fill="#323130"/>
<rect x="972.3" y="58.4" width="18.3" height="11" fill="#faf9f8" stroke="#2b88d8" stroke-width="1.3"/>
<path d="M981.4 69.4V72.4M977.8 72.4H985.2" stroke="#2b88d8" stroke-width="1.3"/>
<!-- sparkline (disabled) -->
<path d="M1035.7 45.4V68.4M1031 49.5H1059M1031 64.5H1059" stroke="#c8c6c4" stroke-width="1.2"/>
<path d="M1035.7 57.4 1040 61 1044.5 53.5 1049 61 1055 52.5 1059 57.4" stroke="#a9c9e8" stroke-width="1.2"/>
</svg>



<!-- ================= RED ANNOTATION BOXES ================= -->
<div class="a" style="left:50px;top:116px;width:122px;height:60px;border:3px solid #e81123"></div>
<div class="a" style="left:1377px;top:461px;width:173px;height:67px;border:3px solid #e81123"></div>

</div>
</body>
</html>
